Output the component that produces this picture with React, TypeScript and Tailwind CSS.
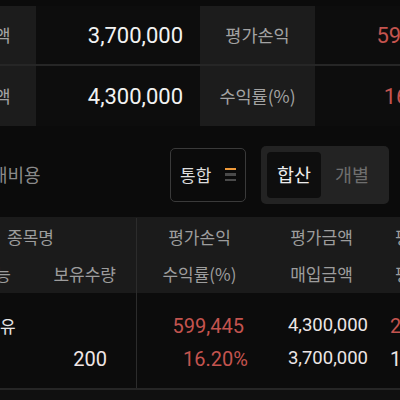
import React from "react";

const RED = "text-[#c4544f]";
const KR = "font-['Noto_Sans_CJK_KR',sans-serif]";

function SummaryRow({
  label1,
  value1,
  label2,
  value2,
  h,
}: {
  label1: string;
  value1: string;
  label2: string;
  value2: string;
  h: string;
}) {
  return (
    <div className={`flex ${h} ml-[-79px]`}>
      <div className={`w-[115px] shrink-0 bg-[#1c1c1c] flex items-center justify-center text-[17.5px] text-[#a3a3a3] ${KR}`}>
        {label1}
      </div>
      <div className="w-[164px] shrink-0 bg-[#0d0d0d] flex items-center justify-end pr-[17px] text-[22px] text-[#f2f2f2]">
        {value1}
      </div>
      <div className={`w-[115px] shrink-0 bg-[#1c1c1c] flex items-center justify-center text-[17.5px] text-[#a3a3a3] ${KR}`}>
        {label2}
      </div>
      <div className={`w-[164px] shrink-0 bg-[#0d0d0d] flex items-center justify-end pr-[24px] text-[22px] ${RED}`}>
        {value2}
      </div>
    </div>
  );
}

export default function App() {
  return (
    <div
      className="w-[400px] h-[400px] overflow-hidden bg-[#0b0b0b] flex flex-col"
      style={{ fontFamily: "Roboto, 'Noto Sans CJK KR', sans-serif" }}
    >
      {/* 요약 */}
      <div className="pt-[6px]">
        <SummaryRow label1="매입금액" value1="3,700,000" label2="평가손익" value2="599,445" h="h-[58px]" />
        <div className="h-[2px] bg-[#262626]" />
        <SummaryRow label1="평가금액" value1="4,300,000" label2="수익률(%)" value2="16.20%" h="h-[60px]" />
      </div>

      {/* 필터 */}
      <div className="h-[91px] shrink-0 flex items-center pt-[6px]">
        <span className={`ml-[-9px] w-[52px] text-[18px] text-[#8a8a8a] ${KR}`}>대비용</span>
        <div className="ml-[127px] w-[76px] h-[54px] border-[1.5px] border-[#3a3a3a] rounded-[5px] flex items-center pl-[9px] gap-[14px]">
          <span className={`text-[17px] text-[#dedede] ${KR}`}>통합</span>
          <div className="flex flex-col gap-[3px]">
            <div className="w-[11px] h-[2.5px] bg-[#ef9a3a]" />
            <div className="w-[11px] h-[2.5px] bg-[#4a4a4a]" />
            <div className="w-[11px] h-[2.5px] bg-[#4a4a4a]" />
          </div>
        </div>
        <div className="ml-[15px] w-[128px] h-[58px] bg-[#232323] rounded-[5px] p-[6px] flex">
          <div className={`w-[54px] bg-[#0e0e0e] rounded-[4px] flex items-center justify-center text-[18.5px] text-[#ededed] ${KR}`}>
            합산
          </div>
          <div className={`flex-1 flex items-center justify-center text-[18.5px] text-[#6e6e6e] ${KR}`}>개별</div>
        </div>
      </div>

      {/* 헤더 */}
      <div className={`h-[76px] shrink-0 bg-[#1b1b1b] flex pt-[1px] text-[17px] text-[#9d9d9d] ${KR}`}>
        <div className="ml-[-75px] w-[212px] shrink-0 border-r border-[#2c2c2c] flex flex-col">
          <div className="h-[37px] flex items-center justify-center">종목명</div>
          <div className="h-[37px] flex">
            <div className="w-[86px] flex items-center justify-end">매도가능</div>
            <div className="flex-1 flex items-center justify-end pr-[20px]">보유수량</div>
          </div>
        </div>
        <div className="w-[125px] shrink-0 flex flex-col">
          <div className="h-[37px] flex items-center justify-center">평가손익</div>
          <div className="h-[37px] flex items-center justify-center">수익률(%)</div>
        </div>
        <div className="w-[119px] shrink-0 flex flex-col">
          <div className="h-[37px] flex items-center justify-center">평가금액</div>
          <div className="h-[37px] flex items-center justify-center">매입금액</div>
        </div>
        <div className="w-[100px] shrink-0 flex flex-col pl-[14px]">
          <div className="h-[37px] flex items-center">평가비중</div>
          <div className="h-[37px] flex items-center">평균단가</div>
        </div>
      </div>

      {/* 종목 */}
      <div className="h-[95px] shrink-0 bg-[#0c0c0c] flex pt-[3px]">
        <div className="ml-[-75px] w-[212px] shrink-0 border-r border-[#2c2c2c] flex flex-col justify-center mt-[-3px]">
          <div className={`h-[33px] flex items-center pl-[28px] pt-[3px] text-[17px] text-[#e6e6e6] ${KR}`}>한국석유</div>
          <div className="h-[33px] flex text-[20px] text-[#f0e6e6] pt-[3px]">
            <div className="w-[72px] flex items-center justify-end">200</div>
            <div className="flex-1 flex items-center justify-end pr-[29px]">200</div>
          </div>
        </div>
        <div className={`w-[125px] shrink-0 flex flex-col justify-center items-end pr-[14px] text-[20px] ${RED}`}>
          <div className="h-[33px] flex items-center pr-[4px]">599,445</div>
          <div className="h-[33px] flex items-center">16.20%</div>
        </div>
        <div className="w-[119px] shrink-0 flex flex-col justify-center items-end pr-[13px] text-[18.5px] text-[#ece6e6]">
          <div className="h-[33px] flex items-center">4,300,000</div>
          <div className="h-[33px] flex items-center">3,700,000</div>
        </div>
        <div className="w-[100px] shrink-0 flex flex-col justify-center pl-[9px] text-[20px]">
          <div className={`h-[33px] flex items-center ${RED}`}>21,500</div>
          <div className="h-[33px] flex items-center text-[#ece6e6]">18,500</div>
        </div>
      </div>
      <div className="h-[2px] bg-[#262626]" />
      <div className="flex-1 bg-[#101010]" />
    </div>
  );
}
